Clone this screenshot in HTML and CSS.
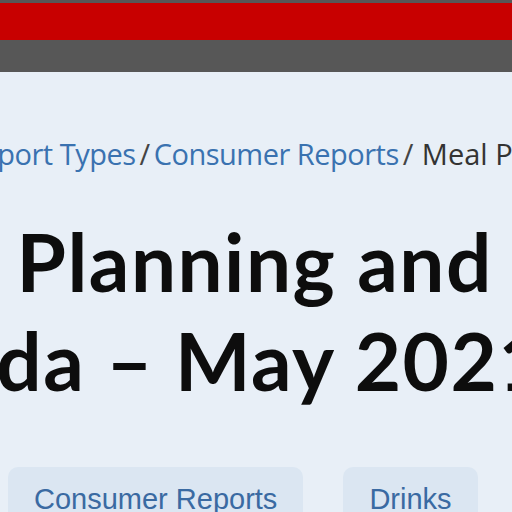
FILE: index.html
```html
<!DOCTYPE html>
<html lang="en">
<head>
<meta charset="utf-8">
<title>Meal Planning and Cooking in Canada – May 2021</title>
<link rel="stylesheet" href="styles.css">
</head>
<body>
<header class="site-header">
  <div class="topline"></div>
  <div class="brandbar"></div>
  <nav class="navbar"></nav>
</header>
<main class="content">
  <div class="breadcrumb">
    <a href="#">Home</a><span class="sep">/</span><a href="#">Report Types</a><span class="sep">/</span><a href="#">Consumer Reports</a><span class="sep">/</span><span class="current">Meal Planning and Cooking in Canada – May 2021</span>
  </div>
  <h1 class="title">
    <span class="line l1">Meal Planning and Cooking in</span>
    <span class="line l2">Canada – May 2021</span>
  </h1>
  <div class="tags">
    <a class="tag" href="#">Consumer Reports</a>
    <a class="tag" href="#">Drinks</a>
  </div>
</main>
</body>
</html>
```

FILE: styles.css
```css
html, body {
  margin: 0;
  padding: 0;
  width: 512px;
  height: 512px;
  overflow: hidden;
  background: #e8eff7;
}
.site-header {
  display: flex;
  flex-direction: column;
}
.topline { height: 3px; background: #575757; }
.brandbar { height: 37px; background: #c80000; }
.navbar { height: 32px; background: #575757; }

.content {
  white-space: nowrap;
}
.breadcrumb {
  margin-top: 66px;
  margin-left: -134px;
  font-family: "Open Sans", sans-serif;
  font-size: 29px;
  line-height: 32px;
  color: #333;
  letter-spacing: -0.5px;
}
.breadcrumb a {
  color: #3a72b0;
  text-decoration: none;
}
.breadcrumb .sep {
  margin: 0 4px;
  color: #444;
}
.breadcrumb .current { color: #333; margin-left: 5px; letter-spacing: 0; }

.title {
  margin: 42px 0 0 -188px;
  font-family: Lato, sans-serif;
  font-weight: 700;
  font-size: 80px;
  letter-spacing: 1.5px;
  line-height: 99px;
  color: #0d0d0d;
  display: flex;
  flex-direction: column;
}
.title .l2 { margin-left: -1px; }

.tags {
  margin-top: 57px;
  margin-left: 8px;
  display: flex;
  gap: 40px;
}
.tag {
  display: block;
  padding: 14px 26px 20px;
  background: #dbe6f2;
  border-radius: 10px;
  font-family: "Liberation Sans", Arial, sans-serif;
  font-size: 29px;
  line-height: 36px;
  color: #3a6aa2;
  text-decoration: none;
}
```
